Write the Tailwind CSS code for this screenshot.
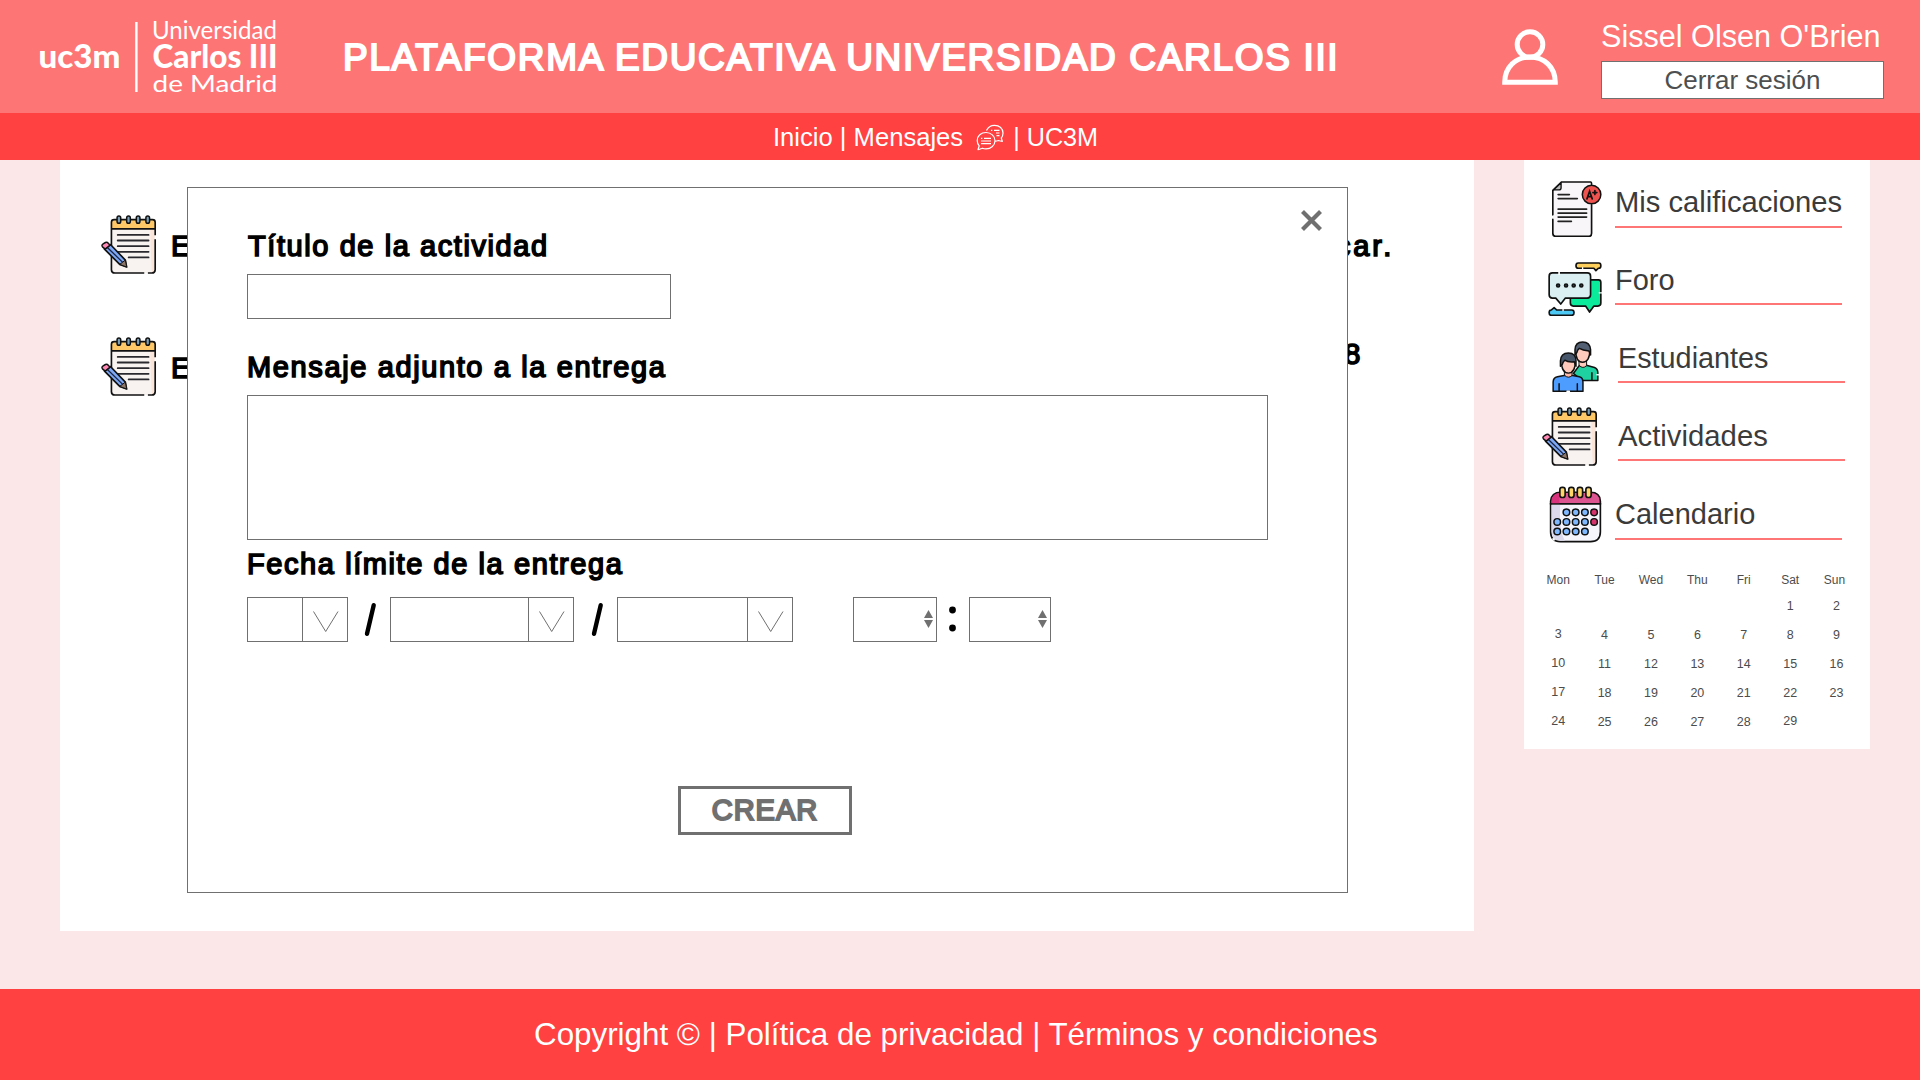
<!DOCTYPE html>
<html lang="es">
<head>
<meta charset="utf-8">
<title>Plataforma Educativa UC3M</title>
<script src="https://cdn.jsdelivr.net/npm/@tailwindcss/browser@4"></script>
</head>
<body class="w-[1920px] h-[1080px] overflow-hidden bg-[#fce7e8] font-['Liberation_Sans',Arial,sans-serif] flex flex-col">

<svg class="hidden">
  <symbol id="notepad" viewBox="66 231 168 178">
    <path d="M97 273V396Q97 406 107 406H219Q229 406 229 396V273Z" fill="#f8f3f1"/>
    <path d="M214 275H227V396Q227 402 219 404Q216 360 214 275Z" fill="#fbe5d8"/>
    <path d="M97 273V253Q97 245 105 245H221Q229 245 229 253V273Z" fill="#fec868"/>
    <path d="M196 406H107Q97 406 97 396V253Q97 245 105 245H221Q229 245 229 253V292M229 304V396Q229 406 219 406H207M97 273H229" fill="none" stroke="#111" stroke-width="5"/>
    <path d="M116 291H209M116 308H209M116 325H209M116 342H209M149 359H209" stroke="#2a2a2e" stroke-width="5.500" stroke-linecap="round"/>
    <g fill="#7ba0b8" stroke="#111" stroke-width="4.5"><rect x="114" y="234" width="11" height="22" rx="5.5"/><rect x="143" y="234" width="11" height="22" rx="5.5"/><rect x="172" y="234" width="11" height="22" rx="5.5"/><rect x="201" y="234" width="11" height="22" rx="5.5"/></g>
    <path d="M76 334L94 320L139 367L143 388L122 380Z" fill="#7da8f5" stroke="#111" stroke-width="5" stroke-linejoin="round"/>
    <path d="M84 328L131 374" stroke="#1b2442" stroke-width="4"/>
    <path d="M122 380L139 367L143 388Z" fill="#8b7568" stroke="#111" stroke-width="3"/>
    <path d="M70 327Q66 322 72 318L79 314Q84 312 88 317L93 322L78 334Z" fill="#ff89b4" stroke="#111" stroke-width="4.5" stroke-linejoin="round"/>
  </symbol>
</svg>

<header class="h-[113px] shrink-0 bg-[#fe7575] flex items-start">
  <svg class="ml-[32px] mt-[12px] w-[256px] h-[90px] shrink-0" viewBox="32 12 256 90" fill="#fff">
    <text x="38.500" y="67.500" font-family="Lato" font-weight="900" font-size="33" textLength="82" lengthAdjust="spacingAndGlyphs">uc3m</text>
    <rect x="135.2" y="22" width="2.4" height="70"/>
    <text x="152" y="39.300" font-family="Lato" font-weight="400" font-size="24.500" textLength="125" lengthAdjust="spacingAndGlyphs">Universidad</text>
    <text x="152.500" y="68" font-family="Lato" font-weight="900" font-size="33" textLength="125" lengthAdjust="spacingAndGlyphs">Carlos III</text>
    <text x="152.500" y="91.700" font-family="Lato" font-weight="400" font-size="23" textLength="125" lengthAdjust="spacingAndGlyphs">de Madrid</text>
  </svg>
  <h1 class="ml-[55px] w-[1158px] h-[116px] leading-[116px] text-[37px] tracking-[1.67px] text-white whitespace-nowrap [-webkit-text-stroke:2px_#fff]">PLATAFORMA EDUCATIVA UNIVERSIDAD CARLOS III</h1>
  <svg class="mt-[28px] w-[58px] h-[58px] shrink-0" viewBox="1501 28 58 58" fill="none" stroke="#fff" stroke-width="5">
    <circle cx="1530" cy="44.500" r="12.800"/>
    <path d="M1504.700 82.300C1504.700 67 1516 57 1530 57S1555.300 67 1555.300 82.300Z"/>
  </svg>
  <div class="ml-[42px] pt-[18px] w-[284px] flex flex-col gap-[7px]">
    <div class="h-9 leading-9 text-[30.6px] text-white whitespace-nowrap">Sissel Olsen O'Brien</div>
    <button class="w-[283px] h-[38px] bg-white border border-[#707070] text-[26px] leading-none text-[#4d4f50]">Cerrar sesión</button>
  </div>
</header>

<nav class="h-[47px] shrink-0 bg-[#ff4141] text-white text-[25.6px] flex items-center pl-[773px] pt-0.5 whitespace-nowrap">
  <span>Inicio | Mensajes</span>
  <svg class="ml-[13px] w-7 h-[27px]" viewBox="0 0 28 27" fill="none" stroke="#fff" stroke-width="1.200" stroke-linejoin="round">
    <path d="M10.500 6.500C12 3 15 1.300 18.500 1.300C23.500 1.300 27 4.700 27 9C27 11.200 26.300 12.800 25.300 14L26.300 17.500L22.300 16.500Q20.500 17.300 19 17.200"/>
    <path d="M10 8.500C5 8.500 1.200 12 1.200 16.500C1.200 18.700 2 20.500 3.200 21.800L2 25.700L6.500 24.200Q8 24.900 10 24.900C15 24.900 19 21.300 19 16.700S15 8.500 10 8.500Z"/>
    <path d="M5 14.300H6.300M8 14.300H15M5 17H15M5 19.700H15M15 6.300H16.300M18 6.300H23.500M20 9H23.500M20.500 11.700H23.500"/>
  </svg>
  <span class="ml-[9px] text-[25.2px]">| UC3M</span>
</nav>

<main class="relative h-[829px] shrink-0 flex items-start gap-[50px] pl-[60px]">
  <section class="w-[1414px] h-[771px] bg-white pt-[55px] px-[41px] flex flex-col gap-[63px] text-[29px] tracking-[1.6px] text-black [-webkit-text-stroke:1.6px_#000]">
    <div class="h-[59px] flex items-start">
      <svg class="w-[56px] h-[59px]"><use href="#notepad"/></svg>
      <span class="ml-[14px] mt-[13px] leading-9">E</span>
      <span class="ml-auto mr-[39px] mt-[13px] leading-9 tracking-[2.8px]">car.</span>
    </div>
    <div class="h-[59px] flex items-start">
      <svg class="w-[56px] h-[59px]"><use href="#notepad"/></svg>
      <span class="ml-[14px] mt-[13px] leading-9">E</span>
      <span class="ml-auto mr-[71px] mt-[-1px] leading-9">8</span>
    </div>
  </section>

  <aside class="w-[346px] h-[589px] bg-white flex flex-col text-[29.3px] text-[#3b3b3b] whitespace-nowrap">
    <div class="h-[78px] shrink-0 flex items-start">
      <div class="w-[91px] shrink-0">
        <svg class="ml-7 mt-[21px] w-[50px] h-[56px]" viewBox="96 62 150 169" stroke-linecap="round">
          <path d="M98 90L124 65H215V220Q215 229 208 229H106Q98 229 98 220Z" fill="#f8f6f9"/>
          <path d="M98 164V90L124 65H212Q215 65 215 72M215 134V220Q215 229 208 229H106Q98 229 98 220V178" fill="none" stroke="#111" stroke-width="5"/>
          <path d="M100 89H116Q123 89 123 82V67Z" fill="#bbb" stroke="#111" stroke-width="4" stroke-linejoin="round"/>
          <path d="M114 103H148M114 115H172M114 147H200M114 159H200M114 171H200M114 184H154" stroke="#222" stroke-width="5"/>
          <circle cx="215" cy="103" r="28" fill="#ef5350" stroke="#111" stroke-width="4.500"/>
          <path d="M201 116L209 93L217 116M204 109H214M219 97H231M225 91V103" fill="none" stroke="#111" stroke-width="5"/>
        </svg>
      </div>
      <a class="mt-6 w-[227px] h-[44px] leading-9 border-b-2 border-[#ff7676] text-[29.2px]">Mis calificaciones</a>
    </div>
    <div class="h-[78px] shrink-0 flex items-start">
      <div class="w-[91px] shrink-0">
        <svg class="ml-6 mt-6 w-[54px] h-[54px]" viewBox="84 305 162 163" stroke="#111" stroke-width="5" stroke-linejoin="round" stroke-linecap="round">
          <path d="M213 359H236Q243 359 243 367V429Q243 438 234 438H222L209 456L197 438H160Q151 438 151 429V410Z" fill="#0aeb9c"/>
          <path d="M238 398H248" stroke="#fff" stroke-width="4"/>
          <path d="M97 338H202Q212 338 212 348V404Q212 414 202 414H136L122 432L107 414H97Q87 414 87 404V348Q87 338 97 338Z" fill="#d9eff2"/>
          <path d="M117 334V342" stroke="#fff" stroke-width="5"/>
          <g fill="#345" stroke-width="5"><circle cx="114" cy="376" r="4.500"/><circle cx="138" cy="376" r="4.500"/><circle cx="161" cy="376" r="4.500"/><circle cx="184" cy="376" r="4.500"/></g>
          <path d="M175 308H237Q243 308 243 316T237 324H235L228 331L222 324H175Q168 324 168 316T175 308Z" fill="#ffd15c"/>
          <path d="M188 322V328" stroke="#fff" stroke-width="4"/>
          <path d="M93 450L102 443L110 450H155Q162 450 162 458T155 466H93Q87 466 87 458T93 450Z" fill="#4cc9f5"/>
          <path d="M129 446V452" stroke="#fff" stroke-width="4"/>
        </svg>
      </div>
      <a class="mt-6 w-[227px] h-[43px] leading-9 border-b-2 border-[#ff7676] text-[29px]">Foro</a>
    </div>
    <div class="h-[78px] shrink-0 flex items-start">
      <div class="w-[94px] shrink-0">
        <svg class="ml-7 mt-[25px] w-[47px] h-[51px]" viewBox="96 32 141 154" stroke="#111" stroke-width="4.500" stroke-linejoin="round" stroke-linecap="round">
          <path d="M160 130L178 106H202L224 112Q234 116 234 128V151H186Z" fill="#1fd1a0"/>
          <path d="M216 128V150" fill="none"/>
          <path d="M231 134H238" stroke="#fff" stroke-width="4"/>
          <path d="M178 92H200V106Q189 118 178 106Z" fill="#ffc9bb" stroke-width="3"/>
          <path d="M167 60Q167 96 188 96T210 60Q200 50 180 52Z" fill="#ffc9bb"/>
          <path d="M165 74V58Q166 35 188 35T212 58V74L207 62Q188 60 178 54Q172 58 171 66Z" fill="#536073"/>
          <path d="M99 184V156Q99 143 112 140L132 136H158L178 140Q189 143 189 156V184Z" fill="#4c9dff"/>
          <path d="M117 161V182M172 161V182" fill="none"/>
          <path d="M141 184H148" stroke="#fff"/>
          <path d="M134 126H156V136Q145 147 134 136Z" fill="#ffb9a9" stroke-width="3"/>
          <path d="M124 92Q124 129 145 129T166 92Q156 84 136 86Z" fill="#ffc9bb"/>
          <path d="M121 108V92Q122 68 145 68T168 92V108L163 95Q144 97 134 90Q128 96 127 102Z" fill="#48566b"/>
        </svg>
      </div>
      <a class="mt-6 w-[227px] h-[43px] leading-9 border-b-2 border-[#ff7676] text-[28.8px]">Estudiantes</a>
    </div>
    <div class="h-[78px] shrink-0 flex items-start">
      <div class="w-[94px] shrink-0"><svg class="ml-[18px] mt-[13px] w-[56px] h-[59px]"><use href="#notepad"/></svg></div>
      <a class="mt-6 w-[227px] h-[43px] leading-9 border-b-2 border-[#ff7676]">Actividades</a>
    </div>
    <div class="h-[78px] shrink-0 flex items-start">
      <div class="w-[91px] shrink-0">
        <svg class="ml-[25px] mt-[14px] w-[53px] h-[57px]" viewBox="87 466 159 173" stroke="#111" stroke-width="5">
          <path d="M91 520V605Q91 635 121 635H212Q242 635 242 605V520Z" fill="#f6f5fb"/>
          <path d="M94 523H120Q116 600 134 632H118Q94 630 94 605Z" fill="#dcd9ec" stroke="none"/>
          <path d="M91 520V512Q93 485 122 485H212Q241 485 242 512V520Z" fill="#dd5590"/>
          <path d="M94 518V512Q96 488 118 488V518Z" fill="#d8327c" stroke="none"/>
          <path d="M97 625L103 631" stroke="#fff" stroke-width="6"/>
          <g fill="#ffd766"><rect x="119" y="470" width="16" height="31" rx="7"/><rect x="146" y="470" width="16" height="31" rx="7"/><rect x="172" y="470" width="16" height="31" rx="7"/><rect x="198" y="470" width="16" height="31" rx="7"/></g>
          <g fill="#7fb8ff" stroke-width="4.500"><circle cx="139" cy="546" r="10"/><circle cx="167" cy="546" r="10"/><circle cx="195" cy="546" r="10"/><circle cx="111" cy="575" r="10"/><circle cx="139" cy="575" r="10"/><circle cx="167" cy="575" r="10"/><circle cx="195" cy="575" r="10"/><circle cx="111" cy="604" r="10"/><circle cx="139" cy="604" r="10"/><circle cx="167" cy="604" r="10"/><circle cx="195" cy="604" r="10"/></g>
          <g fill="#d6336c" stroke-width="4.500"><circle cx="223" cy="546" r="10"/><circle cx="223" cy="575" r="10"/></g>
        </svg>
      </div>
      <a class="mt-6 w-[227px] h-[44px] leading-9 border-b-2 border-[#ff7676] text-[29px]">Calendario</a>
    </div>
    <div class="ml-[11px] mt-[17px] grid grid-cols-[repeat(7,46.4px)] grid-rows-[26px_29px_29px_29px_29px_29px] text-center text-[12.5px] leading-[26px] text-[#4c4c4c]">
      <span class="text-[12px]">Mon</span><span class="text-[12px]">Tue</span><span class="text-[12px]">Wed</span><span class="text-[12px]">Thu</span><span class="text-[12px]">Fri</span><span class="text-[12px]">Sat</span><span class="text-[12px] -ml-1">Sun</span>
      <span class="col-start-6">1</span><span>2</span>
      <span class="-mt-px">3</span><span>4</span><span>5</span><span>6</span><span>7</span><span>8</span><span>9</span>
      <span class="-mt-px">10</span><span>11</span><span>12</span><span>13</span><span>14</span><span>15</span><span>16</span>
      <span class="-mt-px">17</span><span>18</span><span>19</span><span>20</span><span>21</span><span>22</span><span>23</span>
      <span class="-mt-px">24</span><span>25</span><span>26</span><span>27</span><span>28</span><span class="-mt-px">29</span>
    </div>
  </aside>

  <!-- Nueva actividad -->
  <div class="absolute left-[187px] top-[27px] w-[1161px] h-[706px] bg-white border border-[#707070] pl-[59px] pt-[40px] flex flex-col text-[29px] text-black">
    <button class="absolute right-[25px] top-[22px] w-[21px] h-[21px]" aria-label="Cerrar">
      <svg class="w-[21px] h-[21px]" viewBox="0 0 21 21" stroke="#707070" stroke-width="4.200"><path d="M1.500 1.500L19.500 19.500M19.500 1.500L1.500 19.500"/></svg>
    </button>
    <label class="h-9 leading-[37px] tracking-[1.58px] [-webkit-text-stroke:1.6px_#000] ml-px">Título de la actividad</label>
    <div class="mt-[10px] w-[424px] h-[45px] shrink-0 border border-[#707070]"></div>
    <label class="mt-[29px] h-9 leading-[38px] tracking-[1.62px] [-webkit-text-stroke:1.6px_#000]">Mensaje adjunto a la entrega</label>
    <div class="mt-[11px] w-[1021px] h-[145px] shrink-0 border border-[#707070]"></div>
    <label class="mt-[5px] h-9 leading-[38px] tracking-[1.58px] [-webkit-text-stroke:1.6px_#000]">Fecha límite de la entrega</label>
    <div class="mt-[16px] h-[45px] shrink-0 flex items-stretch">
      <div class="w-[101px] border border-[#707070] flex justify-end">
        <div class="w-[45px] border-l border-[#707070]"><svg class="ml-[10px] mt-[13px] w-[26px] h-[22px]" viewBox="0 0 26 22" fill="none" stroke="#707070"><path d="M.5.500L12.700 20.500L25 .5"/></svg></div>
      </div>
      <svg class="w-[42px] h-[45px]" viewBox="0 0 42 45" stroke="#000" stroke-width="4.400" stroke-linecap="round"><path d="M19 36.800L25.700 8.200"/></svg>
      <div class="w-[184px] border border-[#707070] flex justify-end">
        <div class="w-[45px] border-l border-[#707070]"><svg class="ml-[10px] mt-[13px] w-[26px] h-[22px]" viewBox="0 0 26 22" fill="none" stroke="#707070"><path d="M.5.500L12.700 20.500L25 .5"/></svg></div>
      </div>
      <svg class="w-[43px] h-[45px]" viewBox="0 0 43 45" stroke="#000" stroke-width="4.400" stroke-linecap="round"><path d="M20 36.800L26.700 8.200"/></svg>
      <div class="w-[176px] border border-[#707070] flex justify-end">
        <div class="w-[45px] border-l border-[#707070]"><svg class="ml-[10px] mt-[13px] w-[26px] h-[22px]" viewBox="0 0 26 22" fill="none" stroke="#707070"><path d="M.5.500L12.700 20.500L25 .5"/></svg></div>
      </div>
      <div class="ml-[60px] w-[84px] border border-[#707070] flex justify-end items-center pr-[3px]">
        <svg class="w-[9px] h-[18px] -mt-[1px]" viewBox="0 0 9 18" fill="#707070"><path d="M4.500 0L9 8H0ZM4.500 18L0 10H9Z"/></svg>
      </div>
      <svg class="w-8 h-[45px]" viewBox="0 0 32 45"><circle cx="15.500" cy="13" r="3.400"/><circle cx="15.500" cy="31" r="3.400"/></svg>
      <div class="w-[82px] border border-[#707070] flex justify-end items-center pr-[3px]">
        <svg class="w-[9px] h-[18px] -mt-[1px]" viewBox="0 0 9 18" fill="#707070"><path d="M4.500 0L9 8H0ZM4.500 18L0 10H9Z"/></svg>
      </div>
    </div>
    <button class="ml-[431px] mt-[144px] w-[174px] h-[49px] border-[3px] border-[#707070] text-[#707070] leading-[43px] tracking-[1px] [-webkit-text-stroke:2px_#707070]">CREAR</button>
  </div>
</main>

<footer class="h-[91px] shrink-0 bg-[#ff4141] text-white text-[31.35px] flex items-center pt-px pl-[534px] whitespace-nowrap">Copyright © | Política de privacidad | Términos y condiciones</footer>
</body>
</html>
